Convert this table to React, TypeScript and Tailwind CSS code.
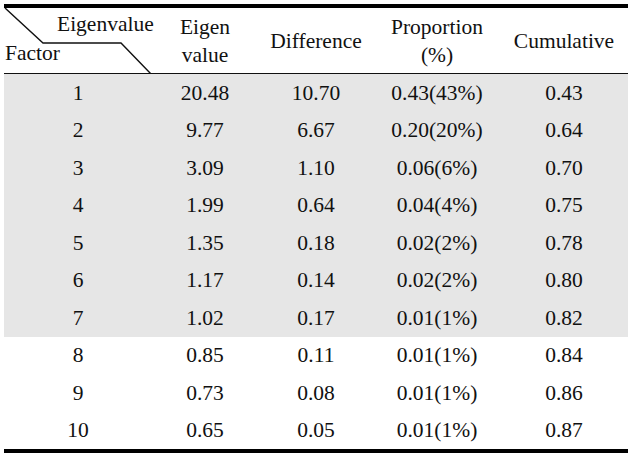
import React from "react";

const rows = [
  ["1", "20.48", "10.70", "0.43(43%)", "0.43"],
  ["2", "9.77", "6.67", "0.20(20%)", "0.64"],
  ["3", "3.09", "1.10", "0.06(6%)", "0.70"],
  ["4", "1.99", "0.64", "0.04(4%)", "0.75"],
  ["5", "1.35", "0.18", "0.02(2%)", "0.78"],
  ["6", "1.17", "0.14", "0.02(2%)", "0.80"],
  ["7", "1.02", "0.17", "0.01(1%)", "0.82"],
  ["8", "0.85", "0.11", "0.01(1%)", "0.84"],
  ["9", "0.73", "0.08", "0.01(1%)", "0.86"],
  ["10", "0.65", "0.05", "0.01(1%)", "0.87"],
];

const cols = "grid grid-cols-[148px_106px_116px_126px_128px]";

export default function App() {
  return (
    <div
      className="w-[630px] h-[458px] bg-white text-[#111] pt-[4px] pl-[4px]"
      style={{ fontFamily: '"Liberation Serif", "Times New Roman", serif' }}
    >
      <div className="w-[624px] text-[21.5px] leading-[28px]">
        {/* header */}
        <div className={`${cols} h-[70px] border-t-[4px] border-black border-b-[1.5px] border-b-[#111]`}>
          <div className="relative h-full">
            <svg className="absolute left-0 top-0" width="148" height="66" viewBox="0 0 148 66">
              <polyline
                points="1,0 39,35 117,35 147,66"
                fill="none"
                stroke="#111"
                strokeWidth="1.4"
              />
            </svg>
            <span className="absolute left-[53px] top-[2px]">Eigenvalue</span>
            <span className="absolute left-[1px] top-[31px]">Factor</span>
          </div>
          <div className="flex flex-col items-center justify-center text-center">
            <span>Eigen</span>
            <span>value</span>
          </div>
          <div className="flex items-center justify-center">Difference</div>
          <div className="flex flex-col items-center justify-center text-center">
            <span>Proportion</span>
            <span>(%)</span>
          </div>
          <div className="flex items-center justify-center">Cumulative</div>
        </div>

        {/* body */}
        <div className="border-b-[4px] border-black">
          {rows.map((r, i) => (
            <div
              key={r[0]}
              className={`${cols} h-[37.5px] items-center ${i < 7 ? "bg-[#e6e6e6]" : "bg-white"}`}
            >
              {r.map((c, j) => (
                <div key={j} className="text-center">
                  {c}
                </div>
              ))}
            </div>
          ))}
        </div>
      </div>
    </div>
  );
}
